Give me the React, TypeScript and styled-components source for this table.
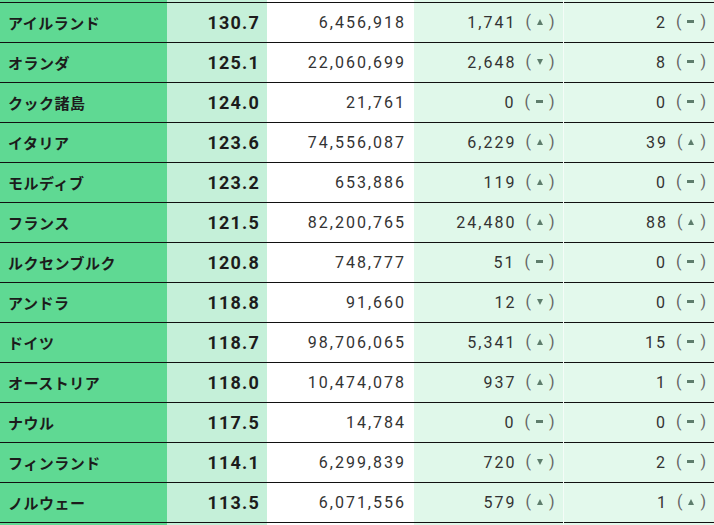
import React from "react";
import styled, { createGlobalStyle } from "styled-components";

const Global = createGlobalStyle`
  html, body { margin: 0; padding: 0; background: #ffffff; overflow: hidden; }
  body { font-family: Roboto, "Noto Sans CJK JP", sans-serif; }
`;

type Trend = "up" | "down" | "flat";
type Row = {
  name: string;
  score: string;
  pop: string;
  a: string;
  at: Trend;
  b: string;
  bt: Trend;
};

const rows: Row[] = [
  { name: "アイルランド", score: "130.7", pop: "6,456,918", a: "1,741", at: "up", b: "2", bt: "flat" },
  { name: "オランダ", score: "125.1", pop: "22,060,699", a: "2,648", at: "down", b: "8", bt: "flat" },
  { name: "クック諸島", score: "124.0", pop: "21,761", a: "0", at: "flat", b: "0", bt: "flat" },
  { name: "イタリア", score: "123.6", pop: "74,556,087", a: "6,229", at: "up", b: "39", bt: "up" },
  { name: "モルディブ", score: "123.2", pop: "653,886", a: "119", at: "up", b: "0", bt: "flat" },
  { name: "フランス", score: "121.5", pop: "82,200,765", a: "24,480", at: "up", b: "88", bt: "up" },
  { name: "ルクセンブルク", score: "120.8", pop: "748,777", a: "51", at: "flat", b: "0", bt: "flat" },
  { name: "アンドラ", score: "118.8", pop: "91,660", a: "12", at: "down", b: "0", bt: "flat" },
  { name: "ドイツ", score: "118.7", pop: "98,706,065", a: "5,341", at: "up", b: "15", bt: "flat" },
  { name: "オーストリア", score: "118.0", pop: "10,474,078", a: "937", at: "up", b: "1", bt: "flat" },
  { name: "ナウル", score: "117.5", pop: "14,784", a: "0", at: "flat", b: "0", bt: "flat" },
  { name: "フィンランド", score: "114.1", pop: "6,299,839", a: "720", at: "down", b: "2", bt: "flat" },
  { name: "ノルウェー", score: "113.5", pop: "6,071,556", a: "579", at: "up", b: "1", bt: "up" },
];

const Table = styled.table`
  width: 714px;
  border-collapse: collapse;
  table-layout: fixed;
`;

const Spacer = styled.tr<{ $h: number }>`
  height: ${(p) => p.$h}px;
  td { padding: 0; height: ${(p) => p.$h}px; line-height: 0; font-size: 0; }
`;

const BodyRow = styled.tr`
  height: 40px;
  border-top: 1px solid #111;
  border-bottom: 1px solid #111;
`;

const NameCell = styled.td`
  width: 167px;
  background: #5fd993;
  padding: 0 0 0 8px;
  font-family: "Noto Sans CJK JP", sans-serif;
  font-weight: 700;
  font-size: 15px;
  letter-spacing: 0.5px;
  color: #1c1c1c;
  white-space: nowrap;
  box-sizing: border-box;
`;

const ScoreCell = styled.td`
  width: 100px;
  background: #c5f0d9;
  padding: 0 7px 0 0;
  text-align: right;
  font-family: Roboto, sans-serif;
  font-weight: 700;
  font-size: 18px;
  letter-spacing: 1.2px;
  color: #1c1c1c;
  box-sizing: border-box;
`;

const NumCell = styled.td<{ $bg: string; $w: number; $divider?: boolean }>`
  width: ${(p) => p.$w}px;
  background: ${(p) => p.$bg};
  padding: 0 8px 0 0;
  text-align: right;
  font-family: Roboto, sans-serif;
  font-weight: 400;
  font-size: 16px;
  letter-spacing: 2px;
  color: #333;
  white-space: nowrap;
  box-sizing: border-box;
  border-left: ${(p) => (p.$divider ? "1px solid #f4fcf7" : "none")};
`;

const TrendWrap = styled.span`
  display: inline-flex;
  align-items: center;
  gap: 6px;
  margin-left: 9px;
  color: #666;
  letter-spacing: 0;
  vertical-align: 1px;
`;

const Paren = styled.span`
  font-size: 16px;
`;

const Tri = styled.span<{ $down?: boolean }>`
  display: inline-block;
  width: 0;
  height: 0;
  border-left: 3.5px solid transparent;
  border-right: 3.5px solid transparent;
  ${(p) =>
    p.$down
      ? "border-top: 6px solid #5e7d6c;"
      : "border-bottom: 6px solid #5e7d6c;"}
`;

const Dash = styled.span`
  display: inline-block;
  width: 7px;
  height: 3px;
  background: #5e7d6c;
`;

const TrendMark = ({ t }: { t: Trend }) => (
  <TrendWrap>
    <Paren>(</Paren>
    {t === "flat" ? <Dash /> : <Tri $down={t === "down"} />}
    <Paren>)</Paren>
  </TrendWrap>
);

const Cells = () => (
  <>
    <NameCell />
    <ScoreCell />
    <NumCell $bg="#ffffff" $w={147} />
    <NumCell $bg="#e0f8ea" $w={149} />
    <NumCell $bg="#e3f9ec" $w={151} $divider />
  </>
);

export default function App() {
  return (
    <>
      <Global />
      <Table>
        <tbody>
          <Spacer $h={2}>
            <Cells />
          </Spacer>
          {rows.map((r) => (
            <BodyRow key={r.name}>
              <NameCell>{r.name}</NameCell>
              <ScoreCell>{r.score}</ScoreCell>
              <NumCell $bg="#ffffff" $w={147}>{r.pop}</NumCell>
              <NumCell $bg="#e0f8ea" $w={149}>
                {r.a}
                <TrendMark t={r.at} />
              </NumCell>
              <NumCell $bg="#e3f9ec" $w={151} $divider>
                {r.b}
                <TrendMark t={r.bt} />
              </NumCell>
            </BodyRow>
          ))}
          <Spacer $h={20}>
            <Cells />
          </Spacer>
        </tbody>
      </Table>
    </>
  );
}
